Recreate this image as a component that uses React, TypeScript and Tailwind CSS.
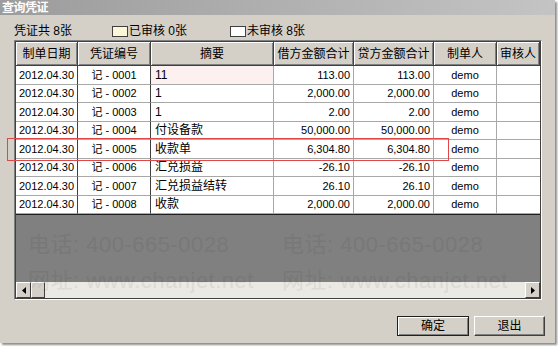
import React from "react";

type Row = {
  date: string;
  no: string;
  memo: string;
  debit: string;
  credit: string;
  maker: string;
};

const rows: Row[] = [
  { date: "2012.04.30", no: "记 - 0001", memo: "11", debit: "113.00", credit: "113.00", maker: "demo" },
  { date: "2012.04.30", no: "记 - 0002", memo: "1", debit: "2,000.00", credit: "2,000.00", maker: "demo" },
  { date: "2012.04.30", no: "记 - 0003", memo: "1", debit: "2.00", credit: "2.00", maker: "demo" },
  { date: "2012.04.30", no: "记 - 0004", memo: "付设备款", debit: "50,000.00", credit: "50,000.00", maker: "demo" },
  { date: "2012.04.30", no: "记 - 0005", memo: "收款单", debit: "6,304.80", credit: "6,304.80", maker: "demo" },
  { date: "2012.04.30", no: "记 - 0006", memo: "汇兑损益", debit: "-26.10", credit: "-26.10", maker: "demo" },
  { date: "2012.04.30", no: "记 - 0007", memo: "汇兑损益结转", debit: "26.10", credit: "26.10", maker: "demo" },
  { date: "2012.04.30", no: "记 - 0008", memo: "收款", debit: "2,000.00", credit: "2,000.00", maker: "demo" },
];

const headers = ["制单日期", "凭证编号", "摘要", "借方金额合计", "贷方金额合计", "制单人", "审核人"];

const cols = "grid grid-cols-[62px_73px_123px_80px_80px_63px_1fr]";
const font = { fontFamily: '"Liberation Sans", "Noto Sans CJK SC", sans-serif' };

// faint watermark left in the empty grey part of the grid
const marks = [
  { x: 28, y: 234 },
  { x: 282, y: 234 },
];

function Button({ label, primary }: { label: string; primary?: boolean }) {
  return (
    <div
      className={
        "h-[20px] flex items-center justify-center text-[12px] text-black bg-[#d4d0c8] " +
        (primary
          ? "w-[72px] border border-[#202020] shadow-[inset_1px_1px_0_#ffffff,inset_-1px_-1px_0_#808080]"
          : "w-[71px] border border-t-white border-l-white border-r-[#404040] border-b-[#404040] shadow-[inset_-1px_-1px_0_#808080]")
      }
    >
      {label}
    </div>
  );
}

const cell = "flex items-center border-r border-b border-b-[#a8a8a8] whitespace-nowrap overflow-hidden";

export default function App() {
  return (
    <div className="relative w-[558px] h-[346px] bg-white overflow-hidden" style={font}>
      <div className="w-[555px] h-[343px] bg-[#d4d0c8] flex flex-col shadow-[2px_2px_2px_rgba(0,0,0,0.45)]">
        {/* title bar */}
        <div className="h-[15px] bg-gradient-to-r from-[#9c9c9c] to-[#c4c4c4] flex items-center pl-[2px]">
          <span className="text-[12px] font-bold text-white leading-none tracking-[-0.5px]">查询凭证</span>
        </div>

        {/* legend */}
        <div className="h-[25px] flex items-end pb-[3px] pl-[14px] text-[12px] text-black leading-none">
          <span>凭证共 8张</span>
          <span className="ml-[40px] w-[16px] h-[11px] border border-[#404040] bg-[#fbf6d6]" />
          <span className="ml-[1px]">已审核 0张</span>
          <span className="ml-[43px] w-[16px] h-[11px] border border-[#404040] bg-white" />
          <span className="ml-[1px]">未审核 8张</span>
        </div>

        {/* grid */}
        <div className="ml-[14px] w-[528px] h-[260px] border border-t-[#808080] border-l-[#808080] border-r-white border-b-white">
          <div className="w-full h-full border border-[#404040] flex flex-col overflow-hidden">
            <div className={cols + " h-[24px] shrink-0"}>
              {headers.map((h) => (
                <div
                  key={h}
                  className="flex items-center justify-center text-[12px] text-black bg-[#d4d0c8] border-r border-b border-r-[#404040] border-b-[#404040] shadow-[inset_1px_1px_0_#ffffff,inset_-1px_-1px_0_#808080] whitespace-nowrap overflow-hidden"
                >
                  {h}
                </div>
              ))}
            </div>
            {rows.map((r, i) => (
              <div key={r.no} className={cols + " h-[18.5px] shrink-0 bg-white text-[11px] text-black"}>
                <div className={cell + " justify-center border-r-[#404040]"}>{r.date}</div>
                <div className={cell + " justify-center border-r-[#404040]"}>{r.no}</div>
                <div className={cell + " pl-[4px] text-[12px] border-r-[#a8a8a8] " + (i === 0 ? "bg-[#fcf0f0]" : "")}>{r.memo}</div>
                <div className={cell + " justify-end pr-[3px] border-r-[#a8a8a8]"}>{r.debit}</div>
                <div className={cell + " justify-end pr-[3px] border-r-[#a8a8a8]"}>{r.credit}</div>
                <div className={cell + " justify-center border-r-[#a8a8a8]"}>{r.maker}</div>
                <div className="border-b border-b-[#a8a8a8]" />
              </div>
            ))}
            <div className="flex-1 bg-[#808080] border-t border-t-[#202020]" />
            {/* horizontal scrollbar */}
            <div className="h-[16px] shrink-0 flex bg-[#ebe9e4]">
              <div className="w-[15px] h-full bg-[#d4d0c8] border border-t-white border-l-white border-r-[#404040] border-b-[#404040] flex items-center justify-center">
                <svg width="4" height="7" viewBox="0 0 4 7"><path d="M4 0 L0 3.5 L4 7 Z" fill="#000" /></svg>
              </div>
              <div className="w-[14px] h-full bg-[#d4d0c8] border border-t-white border-l-white border-r-[#404040] border-b-[#404040]" />
              <div className="flex-1" />
              <div className="w-[15px] h-full bg-[#d4d0c8] border border-t-white border-l-white border-r-[#404040] border-b-[#404040] flex items-center justify-center">
                <svg width="4" height="7" viewBox="0 0 4 7"><path d="M0 0 L4 3.5 L0 7 Z" fill="#000" /></svg>
              </div>
            </div>
          </div>
        </div>

        {/* buttons */}
        <div className="flex justify-end gap-[5px] pr-[10px] mt-[16px]">
          <Button label="确定" primary />
          <Button label="退出" />
        </div>
      </div>

      {/* watermark */}
      {marks.map((m, i) => (
        <div
          key={i}
          className="absolute pointer-events-none text-black opacity-[0.06] leading-none whitespace-nowrap text-[22px] tracking-[0.5px]"
          style={{ left: m.x, top: m.y }}
        >
          <div>电话: 400-665-0028</div>
          <div className="mt-[14px]">网址: www.chanjet.net</div>
        </div>
      ))}

      {/* red highlight box */}
      <div className="absolute left-[7px] top-[138px] w-[442px] h-[23px] border border-[#e04848]" />
    </div>
  );
}
